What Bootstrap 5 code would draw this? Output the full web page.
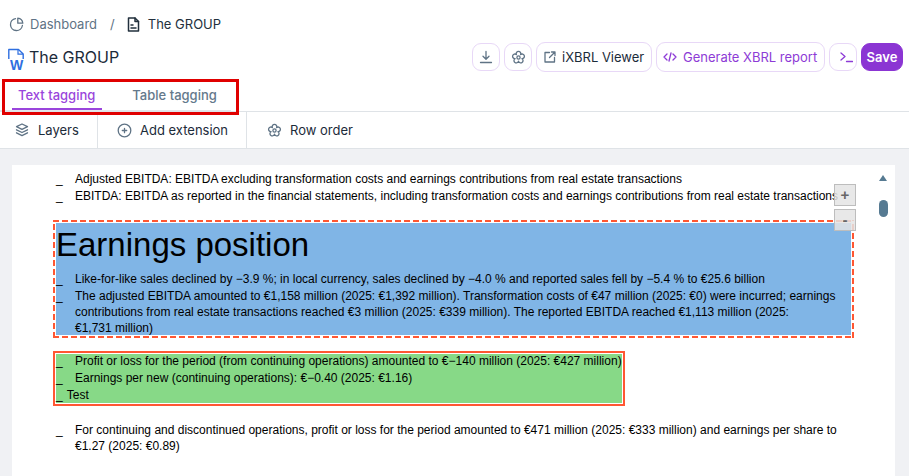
<!doctype html>
<html lang="en"><head><meta charset="utf-8"><title>The GROUP</title>
<link href="https://cdn.jsdelivr.net/npm/bootstrap@5.3.0/dist/css/bootstrap.min.css" rel="stylesheet">
<style>
html,body{height:476px;overflow:hidden;background:#fff}
body{font-family:Inter,"Liberation Sans",sans-serif;color:#1c2b3a;position:relative}
.crumbs{height:41px;padding:16px 0 0 9px;font-size:13px;line-height:17px;color:#5f7385;gap:6px}
.crumbs .sep{margin:0 6px 0 7px}
.crumbs .cur{color:#22303d}
.ico{flex:none;fill:none;stroke:currentColor;stroke-width:1.3;stroke-linecap:round;stroke-linejoin:round}
.titlerow{height:32px;padding:0 6px 0 8px}
.titlerow h1{font-size:16px;font-weight:400;line-height:20px;margin:0 0 0 4px;color:#1c2b3a}
.tbtn{height:30px;border:1px solid #e8d8f7;border-radius:9px;background:#fff;font-size:13px;line-height:17px;padding:0 0 0 7px;color:#1c2b3a;gap:6px;display:inline-flex;align-items:center;white-space:nowrap}
.tbtn.sq{width:28px;height:28px;padding:0;color:#5f7385;justify-content:center}
.tbtn.sq.pur,.tbtn.pur{color:#8d3bd6}
.tbtn.pur{padding-left:6px}
.tbtn.savebtn{background:#8b35d3;border-color:#8b35d3;color:#fff;font-weight:600;width:42px;height:28px;padding:0;justify-content:center}
.tabbar{height:31px;margin-top:7px;padding-left:12px;width:231px;border-bottom:1px solid #e3e6ea}
.tabitem{font-size:13px;font-weight:500;line-height:17px;padding:7px 6px 4px;color:#64798b;border-bottom:2px solid transparent;height:30px}
.tabitem.on{color:#9a45dc;border-bottom-color:#9a45dc;margin-right:24px;padding-right:7px}
.toolrow{height:38px;border-top:1px solid #dfe3e7;border-bottom:1px solid #dfe3e7}
.toolitem{font-size:13px;line-height:17px;color:#1c2b3a;gap:9px;border-right:1px solid #dfe3e7}
.toolitem .ico{color:#5f7385}
.ti1{width:98px;padding-left:15px}
.ti2{width:149px;padding-left:19px;gap:8px}
.ti3{padding-left:20px;border-right:0;gap:8px}
.canvas{height:327px;background:#f0f1f4;padding:16px 14px 0 12px;position:relative}
.sheet{height:311px;background:#fff;font-family:"Liberation Sans",sans-serif;font-size:12px;line-height:16px;color:#000;padding:6px 0 0 44px;position:relative}
.li{display:flex;margin-bottom:1px}
.li b{font-weight:400;flex:none;width:19px}
.bluebox{background:#80b5e6;position:relative;margin-top:19px;width:795px;height:112px}
.bluebox::before{content:"";position:absolute;inset:-3px;pointer-events:none;
background:
repeating-linear-gradient(90deg,#ff5733 0 6px,transparent 6px 9px) top/100% 2px no-repeat,
repeating-linear-gradient(90deg,#ff5733 0 6px,transparent 6px 9px) bottom/100% 2px no-repeat,
repeating-linear-gradient(0deg,#ff5733 0 6px,transparent 6px 9px) left/2px 100% no-repeat,
repeating-linear-gradient(0deg,#ff5733 0 6px,transparent 6px 9px) right/2px 100% no-repeat}
.bluebox h2{font-family:"Liberation Sans",sans-serif;font-size:33px;line-height:44px;margin:0;height:48px;color:#000}
.greenbox{display:flow-root;background:#87d987;outline:2px solid #ff5733;outline-offset:1px;margin-top:19px;width:566px;height:49px}
.greenbox .li:first-child{margin-top:-1px}
.testline{word-spacing:1px}
.para{margin-top:19px;width:790px}
.inset{width:795px}
.zoomer{position:absolute;left:822px;width:22px;height:22px;background:rgba(228,228,228,.85);border:1px solid #bdbdbd;color:#666;font-weight:700;font-size:15px;line-height:19px;text-align:center}
.up{position:absolute;left:867px;top:10px;width:0;height:0;border-left:4.5px solid transparent;border-right:4.5px solid transparent;border-bottom:6px solid #567a92}
.thumb{position:absolute;left:867px;top:35px;width:9px;height:17px;border-radius:5px;background:#567a92}
.redmark{position:absolute;left:2px;top:79px;width:237px;height:36px;border:3px solid #e00000;pointer-events:none}
.logoW{font-family:"Liberation Sans",sans-serif;font-weight:700;font-size:14px;fill:#2f6fe0;text-anchor:middle}
</style></head><body>
<nav class="crumbs d-flex align-items-start">
<svg class="ico" width="15" height="15" viewBox="0 0 15 15" style="margin:1px 0 0"><path d="M6.5 1.6A6 6 0 1 0 13.4 8.5"/><path d="M8.8 1.2a5.6 5.6 0 0 1 5 5H8.8Z"/></svg>
<span>Dashboard</span><span class="sep">/</span>
<svg class="ico cur" width="13" height="15" viewBox="0 0 13 15" style="margin:1px 1px 0 0;stroke-width:1.5"><path d="M1.5 1h6.5l3.5 3.5V14h-10Z"/><path d="M8 1v3.5h3.5M4 8h2M4 11h5"/></svg>
<span class="cur" style="margin-left:1px">The GROUP</span>
</nav>
<div class="titlerow d-flex align-items-center justify-content-between">
<div class="d-flex align-items-center">
<svg width="17" height="32" viewBox="0 0 17 32"><path d="M.8 18V8.5h9.7l4.7 4.4V18" fill="none" stroke="#2f6fe0" stroke-width="1.4" stroke-linejoin="round"/><path d="M10 8.5v4.6h5" fill="none" stroke="#2f6fe0" stroke-width="1.2"/><text class="logoW" x="8.5" y="29">W</text></svg>
<h1>The GROUP</h1></div>
<div class="d-flex align-items-center" style="gap:4px">
<span class="tbtn sq"><svg class="ico" width="14" height="14" viewBox="0 0 14 14"><path d="M7 1.5v7.5M4 6.3 7 9.2l3-2.9M1.5 12.5h11"/></svg></span>
<span class="tbtn sq"><svg class="ico" width="15" height="15" viewBox="0 0 15 15"><path d="M5.38 4.59A2.3 2.3 0 1 1 9.62 4.59A2.3 2.3 0 1 1 10.92 8.61A2.3 2.3 0 1 1 7.5 11.1A2.3 2.3 0 1 1 4.08 8.61A2.3 2.3 0 1 1 5.38 4.59Z"/><circle cx="7.5" cy="7.5" r="1.6"/></svg></span>
<span class="tbtn" style="width:116px"><svg class="ico" width="12" height="12" viewBox="0 0 12 12" style="color:#5f7385"><path d="M5.5 1.5H1v9.5h9.5V6.5M7.5 1H11v3.5M11 1 5.5 6.5"/></svg>iXBRL Viewer</span>
<span class="tbtn pur" style="width:169px"><svg class="ico" width="14" height="12" viewBox="0 0 14 12"><path d="M4 3 1 6l3 3M10 3l3 3-3 3M8 2 6 10"/></svg>Generate XBRL report</span>
<span class="tbtn sq pur"><svg class="ico" width="13" height="13" viewBox="0 0 13 13"><path d="M1 2l4 3.5-4 3.5M6.5 10.5h6"/></svg></span>
<span class="tbtn savebtn">Save</span>
</div></div>
<div class="tabbar d-flex">
<div class="tabitem on">Text tagging</div><div class="tabitem">Table tagging</div>
</div>
<div class="toolrow d-flex">
<div class="toolitem ti1 d-flex align-items-center"><svg class="ico" width="14" height="14" viewBox="0 0 14 14"><path d="M7 1l5.5 2.7L7 6.4 1.5 3.7Z"/><path d="M1.5 6.8 7 9.5l5.5-2.7M1.5 9.8 7 12.6l5.5-2.8"/></svg>Layers</div>
<div class="toolitem ti2 d-flex align-items-center"><svg class="ico" width="15" height="15" viewBox="0 0 15 15"><circle cx="7.5" cy="7.5" r="6.3"/><path d="M7.5 5.3v4.4M5.3 7.5h4.4"/></svg>Add extension</div>
<div class="toolitem ti3 d-flex align-items-center"><svg class="ico" width="15" height="15" viewBox="0 0 15 15"><path d="M5.38 4.59A2.3 2.3 0 1 1 9.62 4.59A2.3 2.3 0 1 1 10.92 8.61A2.3 2.3 0 1 1 7.5 11.1A2.3 2.3 0 1 1 4.08 8.61A2.3 2.3 0 1 1 5.38 4.59Z"/><circle cx="7.5" cy="7.5" r="1.6"/></svg>Row order</div>
</div>
<main class="canvas"><div class="sheet">
<div class="inset">
<div class="li"><b>_</b><span>Adjusted EBITDA: EBITDA excluding transformation costs and earnings contributions from real estate transactions</span></div>
<div class="li"><b>_</b><span>EBITDA: EBITDA as reported in the financial statements, including transformation costs and earnings contributions from real estate transactions</span></div>
</div>
<div class="bluebox">
<h2>Earnings position</h2>
<div class="li"><b>_</b><span>Like-for-like sales declined by −3.9 %; in local currency, sales declined by −4.0 % and reported sales fell by −5.4 % to €25.6 billion</span></div>
<div class="li"><b>_</b><span>The adjusted EBITDA amounted to €1,158 million (2025: €1,392 million). Transformation costs of €47 million (2025: €0) were incurred; earnings contributions from real estate transactions reached €3 million (2025: €339 million). The reported EBITDA reached €1,113 million (2025: €1,731&nbsp;million)</span></div>
</div>
<div class="greenbox">
<div class="li"><b>_</b><span>Profit or loss for the period (from continuing operations) amounted to €−140 million (2025: €427 million)</span></div>
<div class="li"><b>_</b><span>Earnings per new (continuing operations): €−0.40 (2025: €1.16)</span></div>
<div class="testline">_ Test</div>
</div>
<div class="para li"><b>_</b><span>For continuing and discontinued operations, profit or loss for the period amounted to €471 million (2025: €333 million) and earnings per share to €1.27 (2025: €0.89)</span></div>
<div class="zoomer" style="top:19px">+</div>
<div class="zoomer" style="top:44px">-</div>
<div class="up"></div><div class="thumb"></div>
</div></main>
<div class="redmark"></div>
</body></html>
